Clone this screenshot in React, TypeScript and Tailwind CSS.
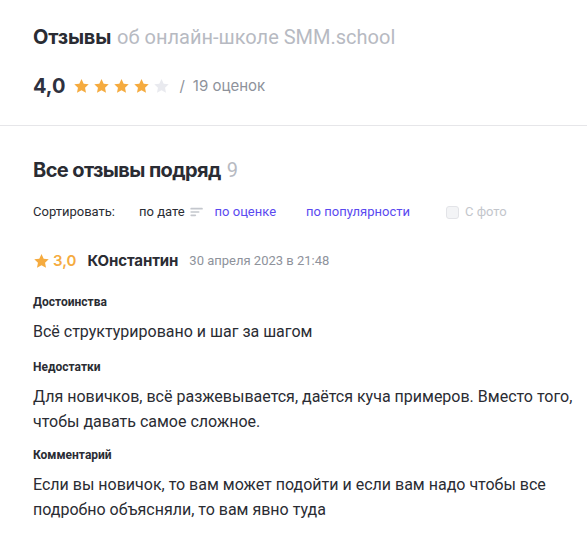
import React from "react";

function Star({ className }: { className: string }) {
  return (
    <svg viewBox="0 0 24 24" className={className} fill="currentColor">
      <path d="M12 1.5l3.1 6.5 7.1.9-5.2 4.9 1.35 7.05L12 17.4l-6.35 3.45L7 13.8 1.8 8.9l7.1-.9L12 1.5z" />
    </svg>
  );
}

function SortIcon() {
  return (
    <svg viewBox="0 0 16 12" className="w-[14px] h-[10px]" fill="#c4c7cd">
      <rect x="0" y="1" width="15" height="2" rx="1" />
      <rect x="0" y="5" width="11" height="2" rx="1" />
      <rect x="0" y="9" width="7" height="2" rx="1" />
    </svg>
  );
}

export default function App() {
  return (
    <main className="w-full bg-white text-[#2a2c33] font-['Inter',sans-serif]">
      <section className="pl-[33px] pt-[23px] pb-[24px] border-b border-[#e6e6e9]">
        <h1 className="h-[28px] flex items-center text-[20px]">
          <span className="font-bold tracking-[-0.2px]">Отзывы</span>
          <span className="ml-[6px] font-['Roboto',sans-serif] text-[#b7bac2]">об онлайн-школе SMM.school</span>
        </h1>
        <div className="mt-[20px] h-[30px] flex items-center">
          <span className="text-[20px] font-bold text-[#2e3140]">4,0</span>
          <div className="ml-[8px] flex gap-[3px]">
            <Star className="w-[17px] h-[17px] text-[#f5ab3f]" />
            <Star className="w-[17px] h-[17px] text-[#f5ab3f]" />
            <Star className="w-[17px] h-[17px] text-[#f5ab3f]" />
            <Star className="w-[17px] h-[17px] text-[#f5ab3f]" />
            <Star className="w-[17px] h-[17px] text-[#e9eaef]" />
          </div>
          <span className="ml-[9px] text-[15px] text-[#8e929b]">/</span>
          <span className="ml-[8px] text-[15px] text-[#8e929b]">19 оценок</span>
        </div>
      </section>

      <section className="pl-[33px] pr-[10px] pt-[30px] pb-[30px]">
        <h2 className="h-[28px] flex items-center text-[20px] font-bold tracking-[-0.6px]">
          Все отзывы подряд
          <span className="ml-[6px] font-normal font-['Roboto',sans-serif] text-[#b7bac2]">9</span>
        </h2>
        <div className="mt-[18px] h-[20px] flex items-center text-[13px] font-['Roboto',sans-serif]">
          <span className="text-[#2a2c33]">Сортировать:</span>
          <span className="ml-[24px] text-[#2a2c33]">по дате</span>
          <span className="ml-[5px] flex items-center"><SortIcon /></span>
          <span className="ml-[11px] text-[#5a49f0]">по оценке</span>
          <span className="ml-[30px] text-[#5a49f0]">по популярности</span>
          <label className="ml-[36px] flex items-center gap-[6px] text-[#c3c6cc]">
            <span className="w-[13px] h-[13px] rounded-[3px] border border-[#e3e4e8] bg-[#f3f4f6]" />
            С фото
          </label>
        </div>

        <div className="mt-[27px] h-[24px] flex items-center">
          <Star className="w-[17px] h-[17px] text-[#f5ab3f]" />
          <span className="ml-[3px] text-[15px] font-semibold text-[#f5ab3f]">3,0</span>
          <span className="ml-[11px] text-[15px] font-bold text-[#2a2c33] tracking-[-0.1px]">КОнстантин</span>
          <span className="ml-[11px] text-[13px] font-['Roboto',sans-serif] text-[#8e929b]">30 апреля 2023 в 21:48</span>
        </div>

        <div className="font-['Roboto',sans-serif] text-[#2a2c33]">
          <h3 className="mt-[20px] h-[18px] flex items-center text-[12px] font-bold">Достоинства</h3>
          <p className="mt-[8px] text-[16px] leading-[25px]">Всё структурировано и шаг за шагом</p>
          <h3 className="mt-[14px] h-[18px] flex items-center text-[12px] font-bold">Недостатки</h3>
          <p className="mt-[8px] text-[16px] leading-[25px]">
            Для новичков, всё разжевывается, даётся куча примеров. Вместо того, чтобы давать самое сложное.
          </p>
          <h3 className="mt-[12px] h-[18px] flex items-center text-[12px] font-bold">Комментарий</h3>
          <p className="mt-[8px] text-[16px] leading-[25px]">
            Если вы новичок, то вам может подойти и если вам надо чтобы все подробно объясняли, то вам явно туда
          </p>
        </div>
      </section>
    </main>
  );
}
